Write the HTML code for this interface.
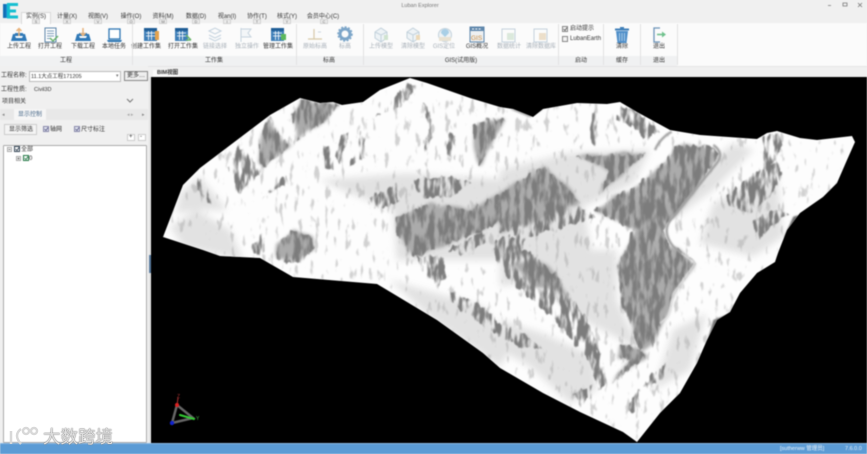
<!DOCTYPE html>
<html><head><meta charset="utf-8"><style>
html,body{margin:0;padding:0;width:867px;height:454px;overflow:hidden;background:#f0f0f0}
body{position:relative;font-family:"Liberation Sans","Noto Sans CJK SC",sans-serif;font-size:6px;color:#333}
.a{position:absolute;white-space:nowrap;line-height:8px}
.c{transform:translateX(-50%)}
.g{color:#a8b0b8}
.k{position:absolute;top:19px;width:8px;height:5px;background:#ececec;border:1px solid #d2d2d2;box-sizing:border-box;font-size:4px;line-height:3px;text-align:center;color:#666;transform:translateX(-50%)}
.b{position:absolute;background:#fff;border:1px solid #bbb;box-sizing:border-box}
#soft{position:absolute;left:0;top:0;width:867px;height:454px;filter:blur(.45px)}
</style></head><body>
<div id="soft">
<div class="a" style="left:0;top:0;width:867px;height:23px;background:#f0f0f0"></div>
<div class="a" style="left:0;top:23px;width:867px;height:43px;background:#fbfbfb"></div>
<div class="a" style="left:0;top:56px;width:677px;height:10px;background:#f0f1f2"></div>
<div class="a" style="left:0;top:66px;width:867px;height:11px;background:#f0f0f0;border-top:1px solid #e4e4e4;box-sizing:border-box"></div>
<div class="a" style="left:21px;top:12px;width:30px;height:12px;background:#fbfbfb;border:1px solid #d8d8d8;border-bottom:0;box-sizing:border-box"></div>
<div class="a c" style="left:420px;top:2px;color:#777;font-size:5.5px">Luban Explorer</div>
<div class="a c" style="left:36px;top:13px">实例(S)</div><div class="a c" style="left:67px;top:13px">计量(X)</div><div class="a c" style="left:98px;top:13px">视图(V)</div><div class="a c" style="left:131px;top:13px">操作(O)</div><div class="a c" style="left:163px;top:13px">资料(M)</div><div class="a c" style="left:196px;top:13px">数据(D)</div><div class="a c" style="left:227px;top:13px">视an(I)</div><div class="a c" style="left:257px;top:13px">协作(T)</div><div class="a c" style="left:287px;top:13px">核式(Y)</div><div class="a c" style="left:323px;top:13px">会员中心(C)</div>
<div class="k" style="left:36px">S</div><div class="k" style="left:67px">X</div><div class="k" style="left:98px">V</div><div class="k" style="left:131px">O</div><div class="k" style="left:163px">M</div><div class="k" style="left:196px">D</div><div class="k" style="left:227px">I</div><div class="k" style="left:257px">T</div><div class="k" style="left:287px">Y</div><div class="k" style="left:324px">C</div>
<div class="a c" style="left:19px;top:43px">上传工程</div><div class="a c" style="left:50px;top:43px">打开工程</div><div class="a c" style="left:83px;top:43px">下载工程</div><div class="a c" style="left:114px;top:43px">本地任务</div><div class="a c" style="left:146px;top:43px">创建工作集</div><div class="a c" style="left:183px;top:43px">打开工作集</div><div class="a c g" style="left:215px;top:43px">链接选择</div><div class="a c g" style="left:247px;top:43px">独立操作</div><div class="a c" style="left:278px;top:43px">管理工作集</div><div class="a c g" style="left:315px;top:43px">原始标高</div><div class="a c g" style="left:345px;top:43px">标高</div><div class="a c g" style="left:381px;top:43px">上传模型</div><div class="a c g" style="left:413px;top:43px">清除模型</div><div class="a c g" style="left:444px;top:43px">GIS定位</div><div class="a c" style="left:477px;top:43px">GIS概况</div><div class="a c g" style="left:509px;top:43px">数据统计</div><div class="a c g" style="left:541px;top:43px">清除数据库</div><div class="a c" style="left:622px;top:43px">清除</div><div class="a c" style="left:659px;top:43px">退出</div>
<div class="a" style="left:570px;top:25px">启动提示</div><div class="a" style="left:570px;top:35px">LubanEarth</div>
<div class="a c" style="left:66px;top:57px">工程</div><div class="a c" style="left:214px;top:57px">工作集</div><div class="a c" style="left:329px;top:57px">标高</div><div class="a c" style="left:461px;top:57px">GIS(试用版)</div><div class="a c" style="left:581px;top:57px">启动</div><div class="a c" style="left:622px;top:57px">缓存</div><div class="a c" style="left:659px;top:57px">退出</div>
<div class="a" style="left:0;top:66px;width:148px;height:377px;background:#f0f0f0"></div>
<div class="a" style="left:1px;top:72px">工程名称:</div>
<div class="b" style="left:29px;top:71px;width:92px;height:11px"></div>
<div class="a" style="left:31px;top:73px;font-size:5.5px">11.1大点工程171205</div>
<div class="a" style="left:116px;top:72px;color:#777;font-size:5px">▾</div>
<div class="b" style="left:124px;top:71px;width:24px;height:10px;background:#eee;border-color:#888"></div>
<div class="a" style="left:127px;top:72px">更多…</div>
<div class="a" style="left:1px;top:86px">工程性质:</div><div class="a" style="left:34px;top:86px;font-size:5.5px">Civil3D</div>
<div class="a" style="left:2px;top:98px">项目相关</div>
<div class="a" style="left:0;top:109px;width:148px;height:11px;background:#e8e8e8"></div>
<div class="a" style="left:14px;top:109px;width:32px;height:11px;background:#f6f6f6"></div>
<div class="a" style="left:18px;top:111px;color:#4a6a8a">显示控制</div>
<div class="a" style="left:2px;top:111px;color:#888;font-size:5px">◂</div><div class="a" style="left:127px;top:111px;color:#aaa;font-size:5px">◂ ▸</div><div class="a" style="left:142px;top:111px;color:#888;font-size:5px">▸</div>
<div class="b" style="left:4px;top:124px;width:33px;height:11px;background:#f4f4f4;border-color:#ccc"></div>
<div class="a" style="left:9px;top:126px">显示筛选</div>
<div class="a" style="left:50px;top:126px">轴网</div><div class="a" style="left:81px;top:126px">尺寸标注</div>
<div class="b" style="left:127px;top:134px;width:8px;height:7px;border-color:#ccc"></div><div class="b" style="left:138px;top:134px;width:8px;height:7px;border-color:#ccc"></div>
<div class="a" style="left:129px;top:133px">+</div><div class="a" style="left:140px;top:133px">-</div>
<div class="b" style="left:3px;top:145px;width:144px;height:298px;border-color:#aaa;border-radius:1px"></div>
<div class="a" style="left:21px;top:146px">全部</div><div class="a" style="left:29px;top:155px">0</div>
<div class="a" style="left:153px;top:70px;width:26px;height:7px;background:#fafafa"></div>
<div class="a" style="left:157px;top:69px;font-size:5.5px;font-weight:bold;color:#333">BIM视图</div>
<div class="a" style="left:151px;top:77px;width:716px;height:366px;background:#000"></div>

<svg class="a" style="left:0;top:0" width="867" height="454" viewBox="0 0 867 454">
<defs>
<clipPath id="t"><path d="M163 237L183 185 200 168 270 115 300 98 320 103 333 102 342 105 363 102 380 90 410 78 427 83 470 98 500 107 513 109 533 117 543 109 577 103 607 104 620 102 637 112 670 130 700 135 757 139 767 133 777 131 800 138 817 140 852 136 855 142 847 160 837 183 823 197 800 213 787 230 778 253 775 262 757 273 740 293 730 312 717 320 707 340 697 363 680 393 660 413 637 442 623 432 580 412 543 393 500 368 483 353 437 320 377 284 293 277 260 258 220 256 203 250Z"/></clipPath>
<filter id="b2" filterUnits="userSpaceOnUse" x="150" y="70" width="717" height="380" color-interpolation-filters="sRGB"><feGaussianBlur stdDeviation="3.5"/></filter>
<filter id="sol" filterUnits="userSpaceOnUse" x="150" y="70" width="717" height="380" color-interpolation-filters="sRGB">
<feTurbulence type="fractalNoise" baseFrequency=".05 .03" numOctaves="2" seed="7" result="n"/>
<feDisplacementMap in="SourceGraphic" in2="n" scale="10" xChannelSelector="R" yChannelSelector="G" result="d"/>
<feGaussianBlur in="d" stdDeviation="1.600"/>
</filter>
<filter id="tex" filterUnits="userSpaceOnUse" x="150" y="70" width="717" height="380" color-interpolation-filters="sRGB">
<feTurbulence type="fractalNoise" baseFrequency=".2 .05" numOctaves="3" seed="4" result="n"/>
<feDisplacementMap in="SourceGraphic" in2="n" scale="8" xChannelSelector="R" yChannelSelector="G" result="d"/>
<feColorMatrix in="n" type="matrix" values="0 0 0 0 0 0 0 0 0 0 0 0 0 0 0 5 0 0 0 -1.900" result="m"/>
<feComposite in="d" in2="m" operator="in" result="s"/>
<feGaussianBlur in="s" stdDeviation=".6"/>
</filter>
<filter id="str" filterUnits="userSpaceOnUse" x="150" y="70" width="717" height="380" color-interpolation-filters="sRGB">
<feTurbulence type="fractalNoise" baseFrequency=".2 .06" numOctaves="3" seed="11" result="n"/>
<feColorMatrix in="n" type="matrix" values="0 0 0 0 0 0 0 0 0 0 0 0 0 0 0 10 0 0 0 -6.300" result="m"/>
<feComposite in="SourceGraphic" in2="m" operator="in" result="s"/>
<feGaussianBlur in="s" stdDeviation=".5"/>
</filter>
<filter id="bl" filterUnits="userSpaceOnUse" x="150" y="70" width="717" height="380" color-interpolation-filters="sRGB"><feGaussianBlur stdDeviation=".8"/></filter>
</defs>
<path d="M163 237L183 185 200 168 270 115 300 98 320 103 333 102 342 105 363 102 380 90 410 78 427 83 470 98 500 107 513 109 533 117 543 109 577 103 607 104 620 102 637 112 670 130 700 135 757 139 767 133 777 131 800 138 817 140 852 136 855 142 847 160 837 183 823 197 800 213 787 230 778 253 775 262 757 273 740 293 730 312 717 320 707 340 697 363 680 393 660 413 637 442 623 432 580 412 543 393 500 368 483 353 437 320 377 284 293 277 260 258 220 256 203 250Z" fill="#fdfdfd"/>
<g clip-path="url(#t)">
<g filter="url(#b2)" fill="#e2e2e2">
<g transform="translate(150 70) scale(.3333)">
<polygon points="60,470 140,420 240,480 280,570 100,530"/>
<polygon points="90,370 150,320 230,420 150,420 80,430"/>
<polygon points="510,330 770,310 1080,330 1080,570 740,570 730,420 600,370"/>
</g>
<g transform="translate(500 70) scale(.3333)">
<polygon points="0,300 200,250 450,240 400,340 250,410 280,570 0,570"/>
<polygon points="560,330 700,220 760,240 640,360 530,440"/>
<polygon points="640,400 830,310 850,500 760,560 600,520"/>
</g>
<g transform="translate(500 250) scale(.3333)">
<polygon points="0,0 350,0 350,150 420,300 230,200 110,90 0,110"/>
<polygon points="0,210 130,250 280,320 290,420 210,460 90,350 0,300"/>
<polygon points="520,240 620,190 570,360 460,420"/>
</g>
<g transform="translate(150 250) scale(.3333)">
<polygon points="720,90 1000,170 1080,300 1050,350 850,210"/>
</g>
</g>
<g filter="url(#sol)" fill="#ababab">
<g transform="translate(150 70) scale(.3333)">
<polygon points="430,130 455,85 510,100 570,105 530,150 470,190 440,215"/>
<polygon points="970,170 1020,145 1065,150 1010,250 990,290 975,230"/>
<polygon points="740,440 850,400 960,420 1000,400 1080,350 1080,440 1000,480 900,520 800,560 770,540 740,490"/>
<polygon points="380,525 430,480 490,500 495,540 450,570 380,570"/>
<polygon points="360,150 335,190 325,280 345,290 420,225 385,190"/>
</g>
<g transform="translate(500 70) scale(.3333)">
<polygon points="530,230 620,225 660,250 610,330 520,440 490,480 510,530 540,570 360,570 400,480 280,420 350,380 430,330 500,270"/>
<polygon points="230,260 440,250 370,310 300,370 330,300"/>
<polygon points="0,370 130,290 210,360 240,400 120,450 0,490"/>
</g>
<g transform="translate(500 250) scale(.3333)">
<polygon points="350,50 380,0 540,0 590,40 530,120 490,210 460,290 420,300 395,240 360,130"/>
<polygon points="40,40 120,30 170,70 210,140 170,130 90,110"/>
<polygon points="335,400 400,350 440,320 420,300 360,280 350,320 390,330"/>
</g>
</g>
<rect x="150" y="70" width="717" height="380" fill="#b4b4b4" filter="url(#str)" opacity=".6"/>
<g filter="url(#tex)" fill="#7c7c7c">
<g transform="translate(150 70) scale(.3333)">
<polygon points="430,130 455,85 510,100 570,105 530,150 470,190 440,215"/>
<polygon points="360,140 335,190 325,280 345,290 420,225 385,190"/>
<polygon points="265,228 235,290 268,370 335,310 295,250"/>
<polygon points="150,325 145,360 185,405 170,345"/>
<polygon points="775,40 810,50 750,110 680,138 720,100"/>
<polygon points="520,230 545,225 552,300 525,295"/>
<polygon points="630,185 648,190 642,265 600,285 622,240"/>
<polygon points="578,190 600,190 570,280 555,260"/>
<polygon points="820,100 835,110 852,190 825,250 838,170"/>
<polygon points="895,190 915,195 915,270 895,260"/>
<polygon points="970,170 1020,145 1065,150 1010,250 990,290 975,230"/>
<polygon points="350,375 410,315 415,340 335,385"/>
<polygon points="660,385 740,340 748,395 700,420 670,415"/>
<polygon points="740,440 850,400 960,420 1000,400 1080,350 1080,440 1000,480 900,520 800,560 770,540 740,490"/>
<polygon points="790,330 900,320 970,340 900,380 820,385"/>
<polygon points="380,525 430,480 490,500 495,540 450,570 380,570"/>
<polygon points="300,530 340,490 345,540 325,560"/>
<polygon points="900,540 1000,480 1010,520 930,555"/>
<polygon points="1030,520 1080,490 1080,570 1040,570"/>
</g>
<g transform="translate(500 70) scale(.3333)">
<polygon points="350,150 365,105 420,130 480,180 440,210 400,170"/>
<polygon points="280,130 295,115 288,230 275,220"/>
<polygon points="530,230 620,225 660,250 610,330 520,440 490,480 510,530 540,570 360,570 400,480 280,420 350,380 430,330 500,270"/>
<polygon points="230,260 440,250 370,310 300,370 330,300"/>
<polygon points="0,370 130,290 210,360 240,400 120,450 0,490"/>
<polygon points="40,470 140,420 240,410 290,440 170,480 50,510"/>
<polygon points="0,520 80,490 60,570 0,570"/>
<polygon points="685,375 760,310 830,280 850,310 820,370 750,430 690,410"/>
<polygon points="790,200 830,190 850,220 800,320 790,280"/>
<polygon points="760,450 830,420 870,430 800,480 780,510"/>
</g>
<g transform="translate(500 250) scale(.3333)">
<polygon points="350,50 380,0 540,0 590,40 530,120 490,210 460,290 420,300 395,240 360,130"/>
<polygon points="0,30 80,0 170,70 210,140 260,200 305,320 320,400 240,470 225,430 290,400 260,320 200,250 150,190 50,110 0,60"/>
<polygon points="335,400 400,350 440,320 420,300 360,280 350,320 390,330"/>
<polygon points="0,230 60,240 130,300 60,290 0,260"/>
<polygon points="430,405 500,335 490,380 450,412"/>
<polygon points="400,440 420,420 410,490 380,480"/>
</g>
<g transform="translate(150 250) scale(.3333)">
<polygon points="380,0 490,0 450,40 400,35"/>
<polygon points="800,20 880,20 895,80 860,110 820,60"/>
<polygon points="900,120 1000,170 1080,250 1050,260 950,190 920,170"/>
<polygon points="1030,0 1080,0 1080,60 1050,50"/>
</g>
</g>
<g filter="url(#bl)">
<g transform="translate(500 70) scale(.3333)">
<polygon points="30,118 130,118 90,142" fill="#aaa"/>
<polygon points="880,440 915,430 850,505" fill="#6f6f6f"/>
<g fill="none"><path d="M515 185Q480 205 465 240M640 225Q675 250 650 280L520 440Q480 480 520 530L570 570" stroke="#a0a0a0" stroke-width="7"/></g>
</g>
<g transform="translate(500 250) scale(.3333)">
<polygon points="640,210 690,190 625,262" fill="#777"/>
<path d="M545 10L585 40 520 130 505 200 480 220" fill="none" stroke="#e4e4e4" stroke-width="4"/>
</g>
</g>
</g>

<!-- axes -->
<g fill="none" stroke-linecap="round">
<path d="M177 405L172 423 193 418Z" stroke="#666" stroke-width="2.500"/>
<path d="M177 405L178 398" stroke="#a33" stroke-width="1"/>
<path d="M180 415L194 419" stroke="#3c3" stroke-width="2"/>
</g>
<circle cx="177" cy="405" r="2" fill="#d22"/><circle cx="172" cy="423" r="2.200" fill="#12c"/>
<text x="196" y="420" font-size="5" fill="#4a4" font-family="Liberation Sans">Y</text>
<text x="177" y="398" font-size="5" fill="#a33" font-family="Liberation Sans">Z</text>

<!-- group separators -->
<g stroke="#e2e2e2">
<path d="M132.500 24V65M296.500 24V65M363.500 24V65M558.500 24V65M603.500 24V65M640.500 24V65M677.500 24V65"/>
</g>
<path d="M149.500 77V443" stroke="#ddd"/>
<rect x="149" y="255" width="2" height="18" fill="#5c7da0"/>

<!-- logo -->
<rect x="3" y="4" width="6" height="14" fill="#1a8fd6"/>
<path d="M7 3H18V6H10V9.500H16V12.500H10V15.500H18V18.500H7Z" fill="#16bfd0"/>
<path d="M3 4H6V18H3Z" fill="#136fb5"/>
<!-- window -->
<path d="M828 5.500H831M843 3H847V6H843ZM858 3L862 7M862 3L858 7" stroke="#777" fill="none" stroke-width=".8"/>

<!-- 上传 -->
<g><path d="M13 34L11 41H27L25 34H23V33H15V34Z" fill="#2f79b7"/><path d="M15 36H23L22 38H16Z" fill="#fff"/><path d="M19 36V29M16.500 31L19 28.500 21.500 31" stroke="#e8b27a" fill="none" stroke-width="1.500"/></g>
<!-- 打开工程 -->
<rect x="45" y="28" width="11" height="14" fill="#fff" stroke="#5a83a8"/><path d="M47 31H54M47 33.500H54M47 36H54M47 38.500H51" stroke="#7b9cb9"/><path d="M50 38L53 41 58 36" stroke="#69b36a" fill="none" stroke-width="1.500"/>
<!-- 下载 -->
<g><path d="M77 34L75 41H91L89 34H87V33H79V34Z" fill="#2f79b7"/><path d="M79 36H87L86 38H80Z" fill="#fff"/><path d="M83 28V35M80.500 33L83 35.500 85.500 33" stroke="#e8b27a" fill="none" stroke-width="1.500"/></g>
<!-- 本地 -->
<rect x="109" y="29" width="11" height="10" fill="#fff" stroke="#2d76b3" stroke-width="1.300"/><path d="M107 40H122L121 42H108Z" fill="#2d76b3"/>
<!-- 工作集 -->
<g><rect x="144" y="28" width="13" height="13" fill="#3e7fb8"/><path d="M146 33H155M146 36H155M148.500 30V40M151.500 30V40" stroke="#fff" stroke-width=".8"/><rect x="144" y="28" width="13" height="3" fill="#1f5d96"/><rect x="155" y="31" width="4" height="9" fill="#e4a24c"/></g>
<g transform="translate(31 0)"><rect x="144" y="28" width="13" height="13" fill="#3e7fb8"/><path d="M146 33H155M146 36H155M148.500 30V40M151.500 30V40" stroke="#fff" stroke-width=".8"/><rect x="144" y="28" width="13" height="3" fill="#1f5d96"/><path d="M155 35L160 40M155 40H160" stroke="#69b36a" stroke-width="1.500"/></g>
<g fill="none" stroke="#c4d2de"><path d="M209 31L215 28 221 31 215 34ZM209 35L215 38 221 35M209 38L215 41 221 38"/></g>
<path d="M241 28V42M241 29H251L248 33 251 37H241" fill="#f3f6f8" stroke="#c6d3de"/>
<g transform="translate(127 0)"><rect x="144" y="28" width="13" height="13" fill="#3e7fb8"/><path d="M146 33H155M146 36H155M148.500 30V40M151.500 30V40" stroke="#fff" stroke-width=".8"/><rect x="144" y="28" width="13" height="3" fill="#1f5d96"/><rect x="154" y="34" width="5" height="6" fill="#5cb85c"/></g>
<!-- 标高 -->
<path d="M308 39H322M314 29V39" stroke="#d7c9a8" stroke-width="1.200"/><path d="M318 32H321" stroke="#c9d5df"/>
<circle cx="345" cy="34" r="5" fill="none" stroke="#7da6c9" stroke-width="3"/><circle cx="345" cy="34" r="7" fill="none" stroke="#7da6c9" stroke-width="1.500" stroke-dasharray="2 1.600"/>
<!-- GIS -->
<g fill="#eef3f6" stroke="#c3d2dc"><path d="M375 32L381 28 387 32V38L381 42 375 38Z"/><path d="M375 32L381 35 387 32M381 35V42" fill="none"/></g><rect x="384" y="35" width="4" height="5" fill="#cfe3cf"/>
<g fill="#eef3f6" stroke="#c3d2dc"><path d="M407 32L413 28 419 32V38L413 42 407 38Z"/><path d="M407 32L413 35 419 32M413 35V42" fill="none"/></g><rect x="416" y="35" width="4" height="5" fill="#ecd9b8"/>
<circle cx="445" cy="35" r="6.500" fill="#eef2f5" stroke="#c3d2dc"/><path d="M441 33a4 4 0 0 1 8 0l-4 4Z" fill="#a9cfe6"/><path d="M439 37H451V41H439Z" fill="#e9e2d2"/>
<rect x="470" y="27" width="14" height="15" fill="#eef0f2" stroke="#5e86ab"/><rect x="470" y="27" width="14" height="4" fill="#5e86ab"/><path d="M472 29H482" stroke="#fff" stroke-dasharray="2 1.300"/><text x="471" y="40" font-size="6.500" fill="#c98a3c" font-family="Liberation Sans">GIS</text>
<rect x="502" y="29" width="13" height="13" fill="#fbfbfb" stroke="#c4d2dc"/><rect x="507" y="33" width="7" height="7" fill="#dbe9dc"/>
<rect x="534" y="29" width="13" height="13" fill="#fbfbfb" stroke="#c4d2dc"/><rect x="539" y="33" width="7" height="7" fill="#ecdfca"/>
<!-- checkboxes -->
<rect x="562.500" y="26.500" width="5" height="5" fill="#f2f2f2" stroke="#888"/><path d="M563.500 29L565 30.500 567 27.500" stroke="#555" fill="none" stroke-width=".8"/>
<rect x="562.500" y="36.500" width="5" height="5" fill="#f2f2f2" stroke="#888"/>
<!-- trash -->
<path d="M616 31H628L626.500 43H617.500Z" fill="#4f8fc9"/><rect x="615" y="28.500" width="14" height="2" fill="#3f7fb8"/><rect x="620" y="27" width="4" height="2" fill="#3f7fb8"/><path d="M619.500 33V41M622 33V41M624.500 33V41" stroke="#cfe2f2" stroke-width=".7"/>
<!-- exit -->
<path d="M660 28H654V42H660" fill="none" stroke="#6b93b8" stroke-width="1.300"/><path d="M657 34.500H664" stroke="#6fc18c" stroke-width="1.600"/><path d="M662 31.500L666 34.500 662 37.500Z" fill="#6fc18c"/>
<!-- panel misc -->
<path d="M127 99L130 102 133 99" stroke="#777" fill="none"/>
<rect x="43.500" y="126.500" width="5" height="5" fill="#dfe3ee" stroke="#88a"/><path d="M44.500 129L46 130.500 48 127.500" stroke="#447" fill="none" stroke-width=".7"/>
<rect x="74.500" y="126.500" width="5" height="5" fill="#dfe3ee" stroke="#88a"/><path d="M75.500 129L77 130.500 79 127.500" stroke="#447" fill="none" stroke-width=".7"/>
<rect x="7.500" y="147.500" width="4" height="4" fill="#fff" stroke="#aaa"/><path d="M8.500 149.500H10.500" stroke="#777"/>
<rect x="14.500" y="146.500" width="5" height="5" fill="#fff" stroke="#345"/><path d="M15.500 149L17 150.500 19 147.500" stroke="#234" fill="none" stroke-width=".8"/>
<rect x="16.500" y="156.500" width="4" height="4" fill="#fff" stroke="#aaa"/><path d="M17.500 158.500H19.500M18.500 157.500V159.500" stroke="#777"/>
<rect x="23.500" y="155.500" width="5" height="5" fill="#fff" stroke="#274"/><path d="M24.500 158L26 159.500 28 156.500" stroke="#274" fill="none" stroke-width=".8"/>
</svg>
<div class="a" style="left:0;top:443px;width:867px;height:11px;background:#5b9bd5;border-top:1px solid #8cb9e2;box-sizing:border-box"></div>
<div class="a" style="left:780px;top:445px;color:#e6f0fa;font-size:5.5px">[sutherww 管理员]</div>
<div class="a" style="left:845px;top:445px;color:#e6f0fa;font-size:5.5px">7.6.0.0</div>
</div>
<!-- watermark -->
<svg class="a" style="left:8px;top:425px" width="32" height="22" viewBox="0 0 32 22" fill="none" stroke="#d8d8d8" stroke-width="2.500"><path d="M3 6V19M13 4Q5 10 13 19"/><circle cx="18" cy="6" r="3"/><circle cx="26" cy="6" r="3"/></svg>
<div class="a" style="left:43px;top:428px;font-size:17.500px;line-height:18px;color:#ddd;text-shadow:0 0 1.500px #888,0 0 1px #888">大数跨境</div>
</body></html>
